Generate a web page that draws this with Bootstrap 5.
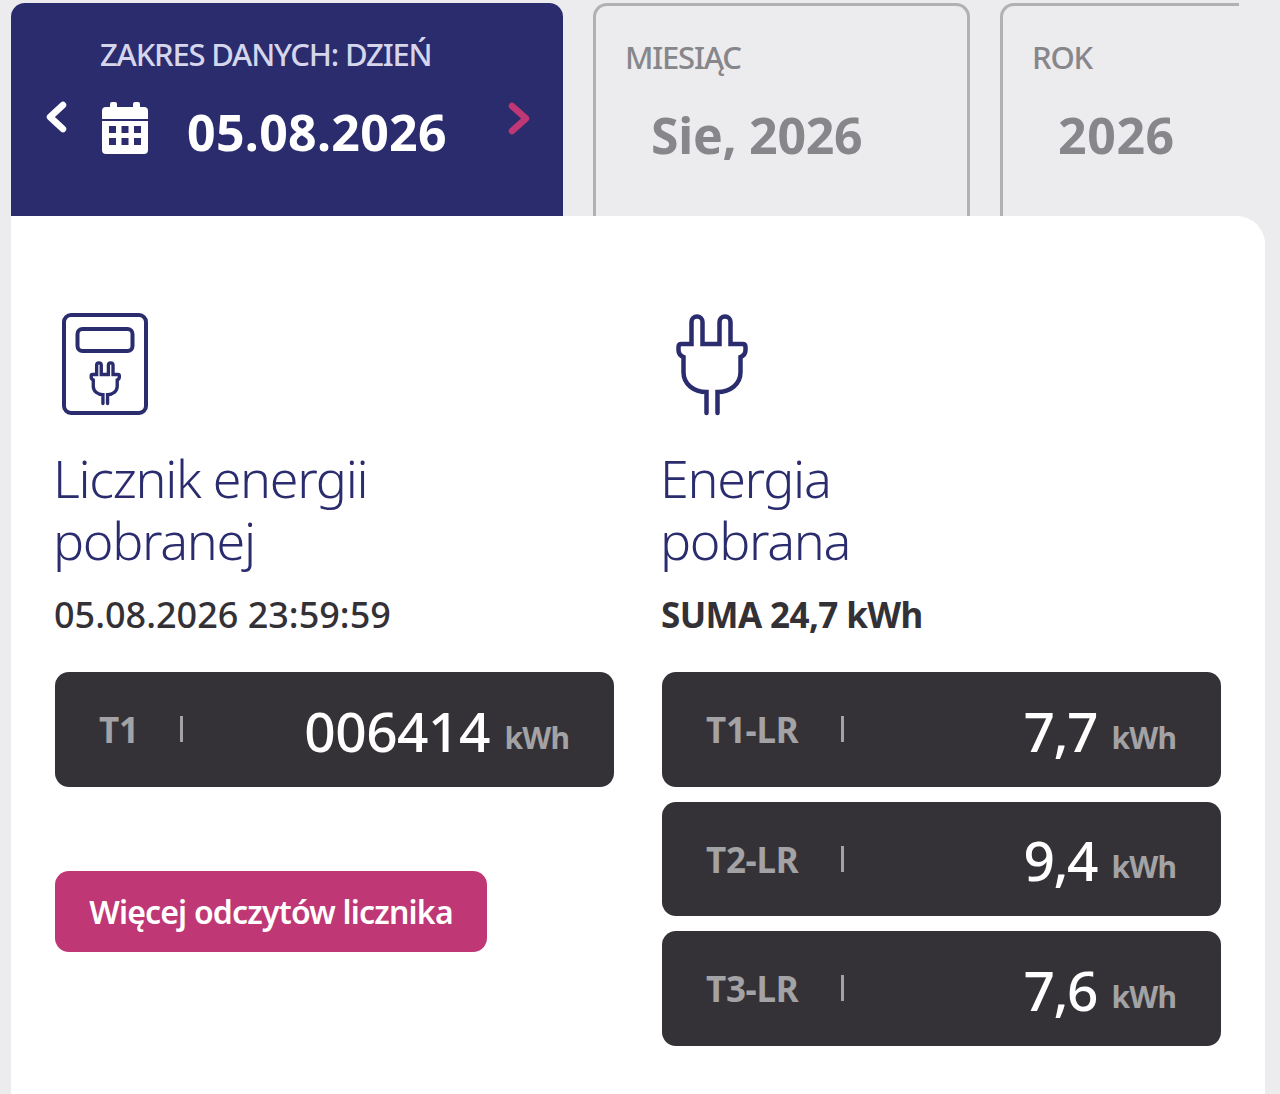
<!DOCTYPE html>
<html lang="pl">
  <head>
    <meta charset="utf-8" />
    <title>Licznik energii</title>
    <link
      rel="stylesheet"
      href="https://cdn.jsdelivr.net/npm/bootstrap@5.3.0/dist/css/bootstrap.min.css"
    />
    <style>
      body {
        background: #ecebed;
        font-family: "Noto Sans", "Open Sans", sans-serif;
        overflow: hidden;
        height: 1094px;
      }
      .tabs-row {
        padding: 3px 0 0 11px;
        gap: 30px;
        height: 216px;
      }
      .range-tab {
        height: 213px;
        border-radius: 14px 14px 0 0;
        flex: none;
      }
      .tab-day {
        width: 552px;
        background: #2a2c6e;
        color: #fff;
        padding: 33px 0 0 35px;
      }
      .tab-month,
      .tab-year {
        border: 3px solid #b1b0b3;
        border-bottom: 0;
        color: #87868a;
        padding-top: 33px;
      }
      .tab-month {
        width: 377px;
        padding-left: 29px;
      }
      .tab-year {
        width: 239px;
        padding-left: 29px;
        border-right: 0;
        border-top-right-radius: 0;
      }
      .tab-label {
        font-size: 31px;
        font-weight: 500;
        line-height: 37px;
        letter-spacing: -1.200px;
      }
      .tab-day .tab-label {
        color: #d5d6ec;
        padding-left: 54px;
      }
      .tab-value {
        font-size: 50px;
        font-weight: 700;
        line-height: 60px;
        margin: 29px 0 0 26px;
        letter-spacing: -0.300px;
      }
      .tab-year .tab-value {
        letter-spacing: 0.600px;
      }
      .date-row {
        margin-top: 29px;
      }
      .date-row .tab-value {
        margin: 0 0 0 39px;
        color: #fff;
        width: 321px;
        letter-spacing: 0.300px;
      }
      .chev-prev {
        margin: -1px 34px 0 0;
      }
      .main-panel {
        background: #fff;
        margin-left: 11px;
        width: 1254px;
        height: 878px;
        border-radius: 0 28px 0 0;
        padding: 97px 44px 0 44px;
        gap: 48px;
      }
      .meter-col {
        width: 559px;
        flex: none;
      }
      .col-icon {
        display: block;
        height: 104px;
      }
      .col-title {
        color: #2a2c6e;
        font-size: 52px;
        font-weight: 300;
        line-height: 62px;
        letter-spacing: -1.300px;
        margin: 30px 0 0 -2px;
      }
      .col-sub {
        color: #333136;
        font-size: 36px;
        line-height: 44px;
        font-weight: 500;
        margin: 22px 0 35px -1px;
      }
      .col-sub.sum-line {
        font-size: 35px;
        font-weight: 700;
        letter-spacing: -0.600px;
      }
      .reading-box {
        background: #343236;
        height: 114.500px;
        border-radius: 14px;
        color: #fff;
        padding: 0 45px 0 44px;
        margin-bottom: 15px;
      }
      .reading-name {
        color: #a3a2a5;
        font-size: 35px;
        font-weight: 700;
        letter-spacing: -0.300px;
        width: 81px;
        padding-top: 2px;
      }
      .t-long .reading-name {
        width: 135px;
      }
      .reading-sep {
        width: 3px;
        height: 26px;
        background: #a3a2a5;
      }
      .reading-val {
        font-size: 55px;
        font-weight: 500;
        line-height: 1;
        letter-spacing: -0.500px;
        padding-top: 2px;
      }
      .t-long .reading-val {
        letter-spacing: -1.500px;
      }
      .reading-unit {
        color: #a3a2a5;
        font-size: 30px;
        font-weight: 700;
        letter-spacing: -0.900px;
        width: 79px;
        text-align: right;
        padding-top: 16px;
      }
      .more-btn {
        background: #c03775;
        color: #fff;
        font-size: 32px;
        font-weight: 600;
        letter-spacing: -0.800px;
        width: 432px;
        height: 81px;
        border-radius: 14px;
        border: 0;
        margin-top: 84.500px;
        padding: 0;
      }
    </style>
  </head>

  <body>
    <!-- tabs -->
    <div class="tabs-row d-flex">
      <div class="range-tab tab-day">
        <div class="tab-label">ZAKRES DANYCH: DZIEŃ</div>
        <div class="date-row d-flex align-items-start">
          <svg class="chev-prev" width="22" height="32" viewBox="0 0 22 32" fill="none" stroke="#fff" stroke-width="6.500" stroke-linecap="round" stroke-linejoin="round">
            <path d="M17 4 4 16l13 12" />
          </svg>
          <svg width="46" height="52" viewBox="0 0 46 52" fill="#fff">
            <rect x="8" y="0" width="7" height="10" rx="2" />
            <rect x="31" y="0" width="7" height="10" rx="2" />
            <path d="M4 5h38a4 4 0 0 1 4 4v8H0V9a4 4 0 0 1 4-4z" />
            <path fill-rule="evenodd" d="M0 19h46v29a4 4 0 0 1-4 4H4a4 4 0 0 1-4-4zM7 24v7h7v-7zM19.500 24v7h7v-7zM32 24v7h7v-7zM7 36v7h7v-7zM19.500 36v7h7v-7zM32 36v7h7v-7z" />
          </svg>
          <div class="tab-value">05.08.2026</div>
          <svg width="22" height="33" viewBox="0 0 22 33" fill="none" stroke="#c03775" stroke-width="6.500" stroke-linecap="round" stroke-linejoin="round">
            <path d="M4 4l14 12.500L4 29" />
          </svg>
        </div>
      </div>
      <div class="range-tab tab-month">
        <div class="tab-label">MIESIĄC</div>
        <div class="tab-value">Sie, 2026</div>
      </div>
      <div class="range-tab tab-year">
        <div class="tab-label">ROK</div>
        <div class="tab-value">2026</div>
      </div>
    </div>

    <div class="main-panel d-flex">
      <div class="meter-col">
        <svg class="col-icon" width="100" height="104" viewBox="0 0 100 104" fill="none" stroke="#2a2c6e" stroke-width="4">
          <rect x="9" y="2" width="82" height="98" rx="7" />
          <rect x="22.500" y="16" width="55" height="22" rx="5" />
          <path
            transform="translate(24 43) scale(0.42)"
            stroke-width="8"
            stroke-linecap="round"
            d="M57 113V92C44 92 34 84 34 72V57Q29 55 29 50V47Q29 44 32 44H42V22a5.500 5.500 0 0 1 11 0V44H70V22a5.500 5.500 0 0 1 11 0V44H93Q96 44 96 47V50Q96 55 91 57V72C91 84 81 92 68 92V113"
          />
        </svg>
        <h2 class="col-title">Licznik energii<br />pobranej</h2>
        <p class="col-sub">05.08.2026 23:59:59</p>
        <div class="reading-box d-flex align-items-center">
          <span class="reading-name">T1</span>
          <span class="reading-sep"></span>
          <span class="reading-val ms-auto">006414</span>
          <span class="reading-unit">kWh</span>
        </div>
        <button class="more-btn btn d-block">Więcej odczytów licznika</button>
      </div>

      <div class="meter-col">
        <svg class="col-icon" width="90" height="104" viewBox="17.500 13 80 104" fill="none" stroke="#2a2c6e" stroke-width="4.500" stroke-linecap="round">
          <path d="M57 113V92C44 92 34 84 34 72V57Q29 55 29 50V47Q29 44 32 44H42V22a5.500 5.500 0 0 1 11 0V44H70V22a5.500 5.500 0 0 1 11 0V44H93Q96 44 96 47V50Q96 55 91 57V72C91 84 81 92 68 92V113" />
        </svg>
        <h2 class="col-title">Energia<br />pobrana</h2>
        <p class="col-sub sum-line">SUMA 24,7 kWh</p>
        <div class="reading-box t-long d-flex align-items-center">
          <span class="reading-name">T1-LR</span>
          <span class="reading-sep"></span>
          <span class="reading-val ms-auto">7,7</span>
          <span class="reading-unit">kWh</span>
        </div>
        <div class="reading-box t-long d-flex align-items-center">
          <span class="reading-name">T2-LR</span>
          <span class="reading-sep"></span>
          <span class="reading-val ms-auto">9,4</span>
          <span class="reading-unit">kWh</span>
        </div>
        <div class="reading-box t-long d-flex align-items-center">
          <span class="reading-name">T3-LR</span>
          <span class="reading-sep"></span>
          <span class="reading-val ms-auto">7,6</span>
          <span class="reading-unit">kWh</span>
        </div>
      </div>
    </div>

    <script src="https://cdn.jsdelivr.net/npm/bootstrap@5.3.0/dist/js/bootstrap.bundle.min.js"></script>
  </body>
</html>
